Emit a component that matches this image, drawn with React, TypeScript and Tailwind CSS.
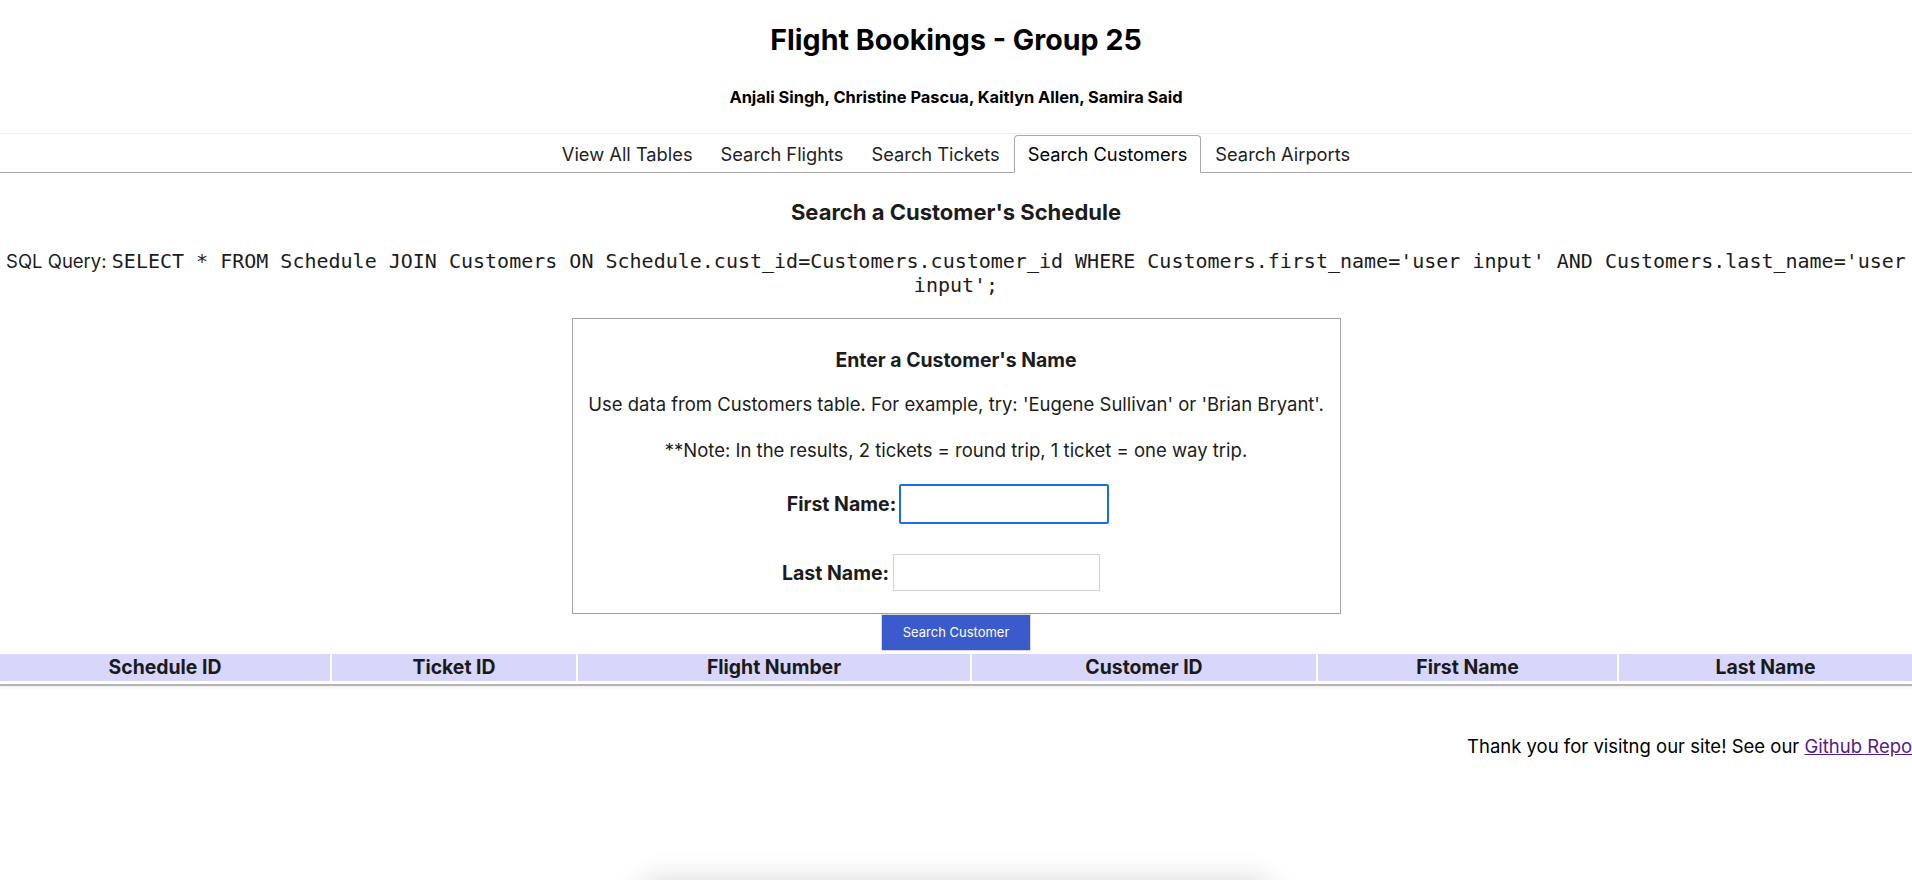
import React from "react";

const cols: { label: string; w: string }[] = [
  { label: "Schedule ID", w: "w-[330px]" },
  { label: "Ticket ID", w: "w-[244px]" },
  { label: "Flight Number", w: "w-[392px]" },
  { label: "Customer ID", w: "w-[344px]" },
  { label: "First Name", w: "w-[299px]" },
  { label: "Last Name", w: "flex-1" },
];

const tabs = ["View All Tables", "Search Flights", "Search Tickets", "Search Customers", "Search Airports"];

export default function App() {
  return (
    <div className="relative min-h-[880px] overflow-hidden bg-white font-['Inter','Liberation_Sans',sans-serif] text-[#1c1c1c]">
      <h1 className="pt-[20px] text-center text-[28.6px] font-bold leading-[40px] text-black">
        Flight Bookings - Group 25
      </h1>
      <p className="mt-[25px] text-center text-[16.4px] font-bold leading-[24px] text-black">
        Anjali Singh, Christine Pascua, Kaitlyn Allen, Samira Said
      </p>

      <nav className="mt-[24px] border-t border-[#efefef]">
        <div className="flex justify-center border-b border-[#a8a8a8] pt-[1px]">
          {tabs.map((t) => {
            const active = t === "Search Customers";
            return (
              <div
                key={t}
                className={
                  active
                    ? "-mb-px h-[38px] rounded-t-[4px] border border-b-white border-[#a8a8a8] bg-white px-[13px] text-[18.3px] leading-[37px] text-black"
                    : "h-[37px] border border-transparent px-[13px] text-[18.3px] leading-[37px] text-[#222]"
                }
              >
                {t}
              </div>
            );
          })}
        </div>
      </nav>

      <h2 className="mt-[25px] text-center text-[22px] font-bold leading-[28px] text-[#1c1c1c]">
        Search a Customer&apos;s Schedule
      </h2>

      <p className="mt-[23px] px-[4px] text-center text-[18.5px] leading-[24px] text-[#1c1c1c]">
        SQL Query:{" "}
        <code className="font-['DejaVu_Sans_Mono',monospace] text-[20px]">
          SELECT * FROM Schedule JOIN Customers ON Schedule.cust_id=Customers.customer_id WHERE
          Customers.first_name=&apos;user input&apos; AND Customers.last_name=&apos;user input&apos;;
        </code>
      </p>

      <div className="mt-[21px] flex flex-col items-center">
        <div className="flex w-[769px] flex-col items-center border border-[#a3a3a3] pb-[22px] pt-[29px]">
          <h3 className="text-[19.4px] font-bold leading-[24px]">Enter a Customer&apos;s Name</h3>
          <p className="mt-[20px] text-[18.5px] leading-[24px]">
            Use data from Customers table. For example, try: &apos;Eugene Sullivan&apos; or &apos;Brian Bryant&apos;.
          </p>
          <p className="mt-[22px] text-[18.5px] leading-[24px]">
            **Note: In the results, 2 tickets = round trip, 1 ticket = one way trip.
          </p>
          <div className="mt-[22px] mr-[16px] flex items-center gap-[3px]">
            <label className="text-[19.5px] font-bold leading-[24px]">First Name:</label>
            <input
              className="h-[40px] w-[210px] rounded-[2px] border-2 border-[#1670e8] bg-white outline-none"
              type="text"
            />
          </div>
          <div className="mt-[30px] mr-[30px] flex items-center gap-[4px]">
            <label className="text-[19.5px] font-bold leading-[24px]">Last Name:</label>
            <input className="h-[37px] w-[207px] border border-[#d2d2d2] bg-white outline-none" type="text" />
          </div>
        </div>
        <button className="h-[37px] w-[150px] border border-[#d9d9d9] bg-[#3b5bcc] text-[13px] text-white">
          Search Customer
        </button>
      </div>

      <div className="mt-[3px] flex gap-[2px] border-b-2 border-[#b5b5b5] pb-[3px] shadow-[0_2px_2px_rgba(0,0,0,0.05)]">
        {cols.map((c) => (
          <div
            key={c.label}
            className={`${c.w} h-[27px] bg-[#d8d6fb] text-center text-[19.4px] font-bold leading-[27px] text-[#1a1a1a]`}
          >
            {c.label}
          </div>
        ))}
      </div>

      <p className="mt-[48px] whitespace-nowrap pl-[1467px] text-[18.5px] leading-[24px] text-black">
        Thank you for visitng our site! See our{" "}
        <a className="text-[#551a8b] underline" href="#">
          Github Repo
        </a>
      </p>

      <div className="pointer-events-none absolute left-[650px] top-[892px] h-[60px] w-[612px] rounded-[12px] bg-white shadow-[0_0_30px_12px_rgba(0,0,0,0.16)]" />
    </div>
  );
}
